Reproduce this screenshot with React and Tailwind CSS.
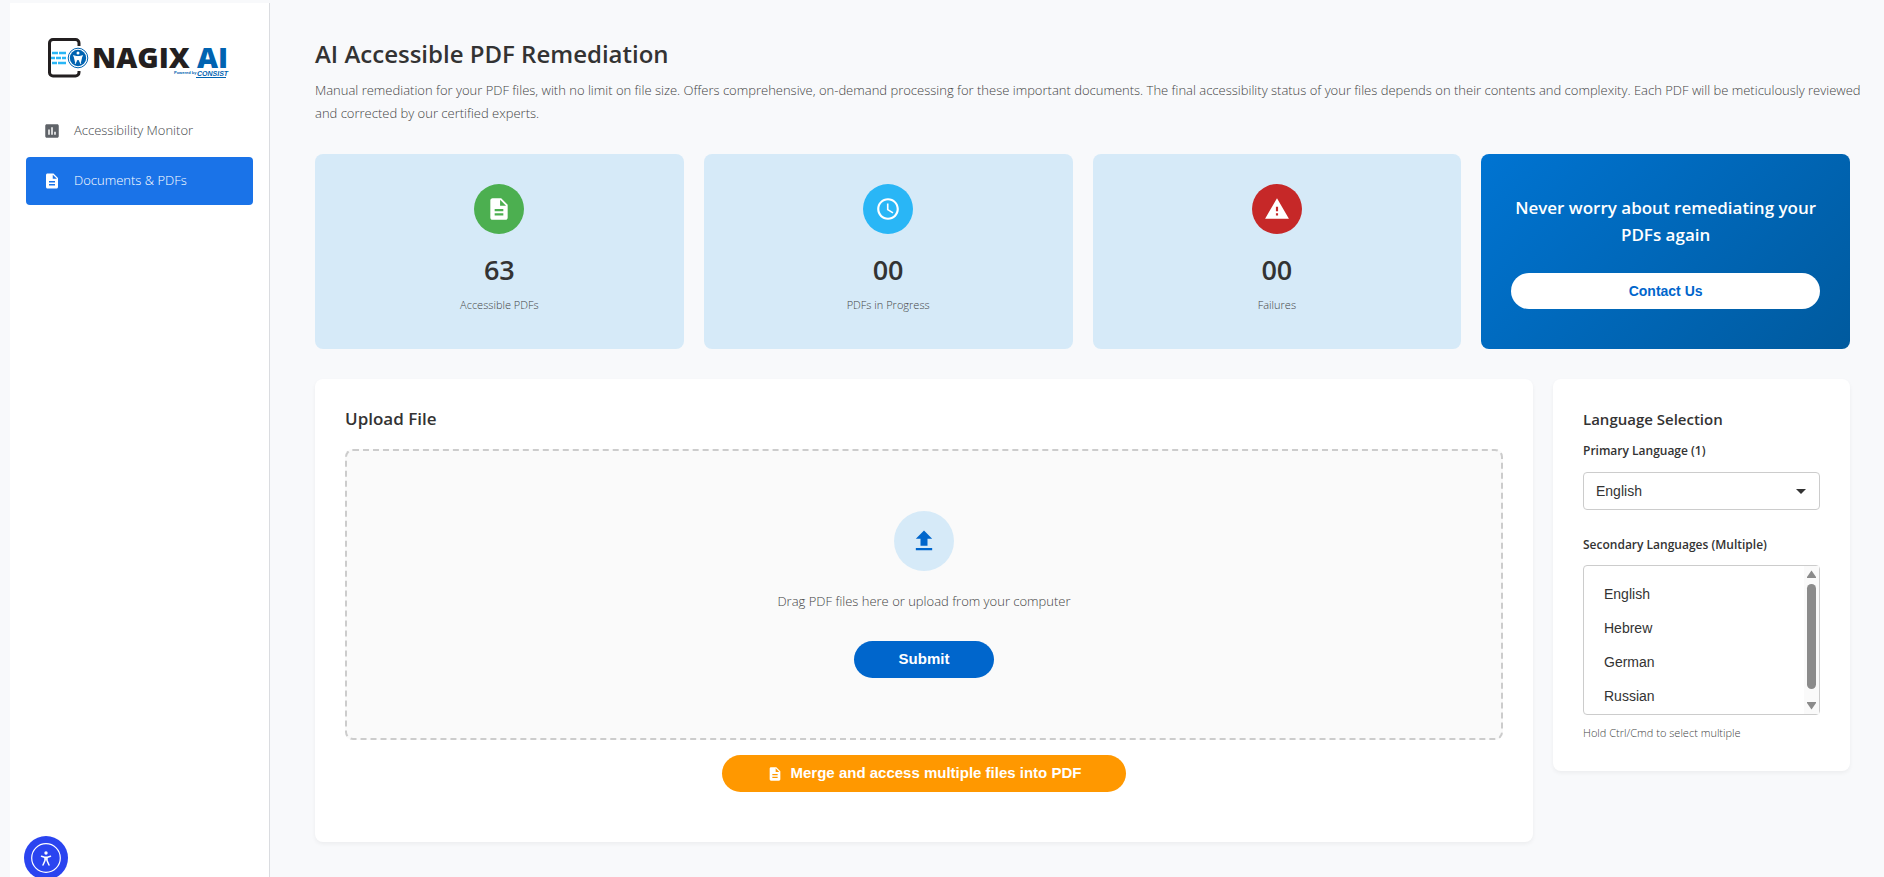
import {
  MdAccessTime,
  MdArrowDropDown,
  MdAssessment,
  MdDescription,
  MdFileUpload,
  MdWarning,
} from "react-icons/md";

const languages = ["English", "Hebrew", "German", "Russian"];

const stats = [
  { label: "Accessible PDFs", value: "63", icon: MdDescription, color: "bg-[#4caf50]" },
  { label: "PDFs in Progress", value: "00", icon: MdAccessTime, color: "bg-[#29b6f6]" },
  { label: "Failures", value: "00", icon: MdWarning, color: "bg-[#c62828]" },
];

const navItems = [
  { label: "Accessibility Monitor", icon: MdAssessment },
  { label: "Documents & PDFs", icon: MdDescription, active: true },
];

function Logo() {
  return (
    <svg width="184" height="46" viewBox="0 0 184 46" role="img" aria-label="Nagix AI">
      <path
        d="M31 11V8a3.500 3.500 0 0 0-3.500-3.500H5A3.500 3.500 0 0 0 1.500 8v29.500A3.500 3.500 0 0 0 5 41h22.500a3.500 3.500 0 0 0 3.500-3.500V36"
        fill="none"
        stroke="#231f20"
        strokeWidth="3"
      />
      <path
        d="M4 18h6M11 18h7M3 23h4M8 23h5M14 23h4M4 28h5M10 28h8"
        stroke="#29b6f6"
        strokeWidth="2.600"
      />
      <circle cx="30" cy="23" r="9.800" fill="#fff" stroke="#0063b1" strokeWidth="1" />
      <circle cx="30" cy="23" r="8.200" fill="#0063b1" />
      <circle cx="30" cy="18" r="1.500" fill="#fff" />
      <path
        d="M25.500 20.800l3.500.8v3L27.300 28.500M34.500 20.800l-3.500.8v3l1.700 3.900M29 21.600h2v3h-2z"
        fill="#fff"
        stroke="#fff"
        strokeLinecap="round"
      />
      <text x="44" y="33" fill="#231f20" className="font-['Open_Sans',sans-serif] text-[29px] font-extrabold">
        NAGIX
      </text>
      <text x="149" y="33" fill="#0063b1" className="font-['Open_Sans',sans-serif] text-[29px] font-extrabold">
        AI
      </text>
      <text x="126" y="39" fill="#0063b1" className="font-['Liberation_Sans',sans-serif] text-[4px] font-bold">
        Powered by
      </text>
      <text x="149" y="41" fill="#0063b1" className="font-['Liberation_Sans',sans-serif] text-[7px] font-bold italic">
        CONSIST
      </text>
      <path d="M148 42.500h30" stroke="#0063b1" />
    </svg>
  );
}

function Sidebar() {
  return (
    <aside className="mt-[3px] ml-[10px] w-[260px] shrink-0 border-r border-[#dadce0] bg-white px-4">
      <div className="pt-8 pl-[22px]">
        <Logo />
      </div>
      <nav className="mt-[26px] flex flex-col gap-0.5">
        {navItems.map((item) => (
          <a
            key={item.label}
            href="#"
            className={`flex h-12 items-center gap-3 rounded px-4 text-[13px] font-light ${
              item.active ? "bg-[#1a73e8] text-white" : "text-[#44474b]"
            }`}
          >
            <span className="flex w-5 justify-center">
              <item.icon size={18} className={item.active ? "text-white" : "text-[#5f6368]"} />
            </span>
            {item.label}
          </a>
        ))}
      </nav>
    </aside>
  );
}

function StatCard({ stat }) {
  return (
    <div className="flex flex-col items-center rounded-lg bg-[#d6eaf8] px-[30px] pt-[30px] pb-[34px]">
      <div className={`mb-[15px] flex size-[50px] items-center justify-center rounded-full text-white ${stat.color}`}>
        <stat.icon size={26} />
      </div>
      <div className="mb-1 text-[27px] leading-[42px] font-semibold">{stat.value}</div>
      <div className="text-[11px] leading-5 font-light text-[#444]">{stat.label}</div>
    </div>
  );
}

function UploadCard() {
  return (
    <section className="min-w-0 flex-1 rounded-lg bg-white px-[30px] pt-[30px] pb-[50px] shadow-[0_2px_4px_rgba(0,0,0,0.05)]">
      <h2 className="mb-5 text-[17px] leading-5 font-semibold">Upload File</h2>
      <div className="flex flex-col items-center rounded-lg border-2 border-dashed border-[#ccc] bg-[#fafafa] py-[60px]">
        <div className="mb-5 flex size-[60px] items-center justify-center rounded-full bg-[#d6eaf8] text-[#0066cc]">
          <MdFileUpload size={28} />
        </div>
        <p className="mb-[30px] text-[13px] leading-5 font-light text-[#444]">
          Drag PDF files here or upload from your computer
        </p>
        <button className="h-[37px] w-[140px] rounded-full bg-[#0066cc] font-['Liberation_Sans',sans-serif] text-[15px] font-bold text-white">
          Submit
        </button>
      </div>
      <button className="mx-auto mt-[15px] flex h-[37px] w-[404px] items-center justify-center gap-2 rounded-full bg-[#ff9800] font-['Liberation_Sans',sans-serif] text-[15px] font-bold text-white">
        <MdDescription size={16} />
        Merge and access multiple files into PDF
      </button>
    </section>
  );
}

function LanguageCard() {
  return (
    <section className="w-[297px] shrink-0 rounded-lg bg-white px-[30px] pt-[30px] pb-7 shadow-[0_2px_4px_rgba(0,0,0,0.05)]">
      <h2 className="mb-3 text-[15px] leading-5 font-semibold">Language Selection</h2>
      <label htmlFor="primary" className="mb-[11px] block text-xs leading-5 font-semibold">
        Primary Language (1)
      </label>
      <div className="relative mb-[25px]">
        <select
          id="primary"
          className="block h-[38px] w-full appearance-none rounded border border-[#ccc] bg-white px-3 font-['Liberation_Sans',sans-serif] text-sm"
        >
          <option>English</option>
        </select>
        <MdArrowDropDown size={24} className="pointer-events-none absolute top-[7px] right-[7px]" />
      </div>
      <label htmlFor="secondary" className="mb-[10px] block text-xs leading-5 font-semibold">
        Secondary Languages (Multiple)
      </label>
      <div className="relative">
        <select
          id="secondary"
          multiple
          className="block h-[150px] w-full overflow-hidden rounded border border-[#ccc] bg-white px-2 pt-[11px] font-['Liberation_Sans',sans-serif] text-sm [scrollbar-width:none]"
        >
          {languages.map((language) => (
            <option key={language} className="h-[34px] px-3 py-[9px] leading-4">
              {language}
            </option>
          ))}
        </select>
        {/* scrollbar of the list */}
        <div
          aria-hidden="true"
          className="absolute top-px right-px bottom-px flex w-[15px] flex-col items-center justify-between bg-[#fafafa] py-1 text-[#8b8b8b]"
        >
          <svg width="9" height="8" viewBox="0 0 9 8" fill="currentColor">
            <path d="M4.500 0.500L9 7v1H0V7z" />
          </svg>
          <div className="mt-[6px] mb-auto h-[105px] w-[9px] rounded-full bg-[#8b8b8b]" />
          <svg width="9" height="8" viewBox="0 0 9 8" fill="currentColor">
            <path d="M4.500 7.500L9 1V0H0v1z" />
          </svg>
        </div>
      </div>
      <p className="mt-2 text-[11px] leading-5 font-light text-[#444]">Hold Ctrl/Cmd to select multiple</p>
    </section>
  );
}

export default function App() {
  return (
    <div className="flex min-h-screen bg-[#f8f9fb] font-['Open_Sans','Noto_Sans',sans-serif] text-[#333]">
      <Sidebar />
      <main className="min-w-0 flex-1 pt-[34px] pr-[34px] pb-[35px] pl-[45px]">
        <h1 className="text-2xl leading-[39px] font-semibold">AI Accessible PDF Remediation</h1>
        <p className="-mr-4 mt-[6px] text-[13px] leading-[23px] font-light text-[#444]">
          Manual remediation for your PDF files, with no limit on file size. Offers comprehensive, on-demand processing
          for these important documents. The final accessibility status of your files depends on their contents and
          complexity. Each PDF will be meticulously reviewed and corrected by our certified experts.
        </p>

        <div className="mt-[29px] grid grid-cols-4 gap-5">
          {stats.map((stat) => (
            <StatCard key={stat.label} stat={stat} />
          ))}
          <div className="flex flex-col justify-center rounded-lg bg-[linear-gradient(135deg,#0074d2,#005a9e)] px-[30px] text-center text-white">
            <h2 className="mb-[25px] text-[17px] leading-[27px] font-semibold">
              Never worry about remediating your PDFs again
            </h2>
            <button className="h-9 rounded-full bg-white font-['Liberation_Sans',sans-serif] text-sm font-bold text-[#0066cc]">
              Contact Us
            </button>
          </div>
        </div>

        <div className="mt-[30px] flex items-start gap-5">
          <UploadCard />
          <LanguageCard />
        </div>
      </main>

      {/* accessibility widget */}
      <button
        aria-label="Accessibility options"
        className="fixed -bottom-[3px] left-6 flex size-11 items-center justify-center rounded-full bg-[#2a44f0]"
      >
        <svg width="30" height="30" viewBox="0 0 30 30" fill="none" stroke="#fff" strokeLinecap="round">
          <circle cx="15" cy="15" r="14.300" strokeWidth="1.200" />
          <circle cx="15" cy="10" r="1.700" fill="#fff" stroke="none" />
          <path d="M10.500 13.200l3 1h3l3-1M14 14.500v3l-2 4.500M16 14.500v3l2 4.500M14 16h2" strokeWidth="1.500" strokeLinejoin="round" />
        </svg>
      </button>
    </div>
  );
}
